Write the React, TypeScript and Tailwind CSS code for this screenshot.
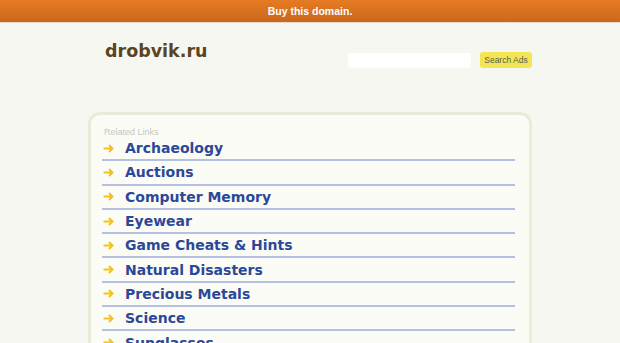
const links = [
  'Archaeology',
  'Auctions',
  'Computer Memory',
  'Eyewear',
  'Game Cheats & Hints',
  'Natural Disasters',
  'Precious Metals',
  'Science',
  'Sunglasses',
];

function Arrow() {
  return (
    <svg width="11" height="9" viewBox="0 0 11 9" className="shrink-0">
      <path d="M0.5 4.5 H9.5 M6 1 L9.5 4.5 L6 8" fill="none" stroke="#f2c31c" strokeWidth="2" />
    </svg>
  );
}

export default function App() {
  return (
    <div className="min-h-screen bg-[#f7f7f1] font-['DejaVu_Sans',sans-serif] overflow-hidden">
      {/* top banner */}
      <div className="h-[23px] bg-gradient-to-b from-[#e67b22] to-[#c9681d] border-b border-[#e2d9c8] flex items-center justify-center">
        <span className="text-white text-[10.5px] font-['Liberation_Sans',sans-serif] font-bold leading-none">
          Buy this domain.
        </span>
      </div>

      <div className="w-[444px] mx-auto">
        {/* header */}
        <div className="flex justify-between items-start pt-[20px] h-[89px]">
          <div className="pl-[17px] text-[17.5px] font-bold text-[#5b4421] leading-none">drobvik.ru</div>
          <div className="flex items-center mt-[9px]">
            <div className="w-[123px] h-[15px] bg-white rounded-[3px]" />
            <div className="ml-[9px] w-[52px] h-[16px] rounded-[3px] bg-[#f3e655] flex items-center justify-center text-[8.5px] text-[#5c5c4c] font-['Liberation_Sans',sans-serif]">
              Search Ads
            </div>
          </div>
        </div>

        {/* related links panel */}
        <div className="border-[3px] border-[#ebebd9] rounded-[12px] bg-[#fcfcf7] pl-[11px] pr-[14px] pt-[13px] h-[300px]">
          <div className="pl-[2px] text-[9px] text-[#c6c6be] font-['Liberation_Sans',sans-serif] leading-none">
            Related Links
          </div>
          <div>
            {links.map((l) => (
              <div key={l} className="h-[24.3px] border-b-2 border-[#b5c0e2] flex items-center">
                <div className="w-[23px] pl-[1px] flex items-center">
                  <Arrow />
                </div>
                <span className="text-[14px] font-bold text-[#2b4898] leading-none">{l}</span>
              </div>
            ))}
          </div>
        </div>
      </div>
    </div>
  );
}
